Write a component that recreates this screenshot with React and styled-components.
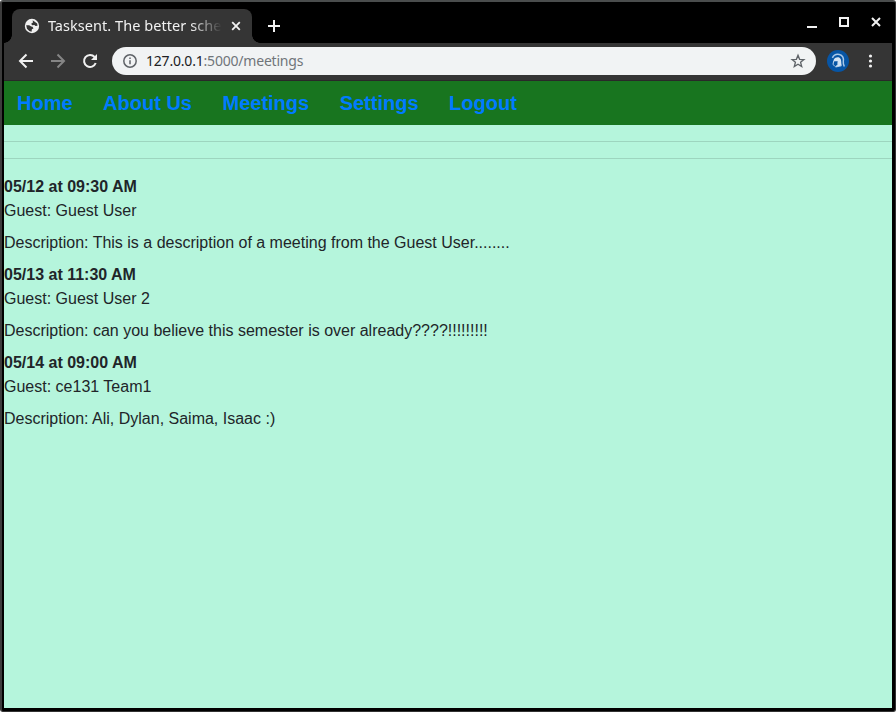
import React from "react";
import styled, { createGlobalStyle } from "styled-components";

const GlobalStyle = createGlobalStyle`
  * { box-sizing: border-box; }
  html, body { margin: 0; padding: 0; overflow: hidden; background: #fff; }
`;

const Window = styled.div`
  width: 896px;
  height: 712px;
  display: flex;
  flex-direction: column;
  background: #000;
  border-style: solid;
  border-color: #4a4d4d #333 #333 #3c3c3c;
  border-width: 2px 1px 1px 2px;
  border-radius: 3px;
  padding: 0 3px 3px 2px;
  font-family: "Noto Sans", "Open Sans", sans-serif;
`;

const TitleBar = styled.header`
  height: 41px;
  flex: none;
  display: flex;
  align-items: flex-end;
  padding-left: 8px;
`;

const Tab = styled.div`
  position: relative;
  width: 240px;
  height: 34px;
  display: flex;
  align-items: center;
  padding: 0 8px 0 12px;
  background: #353535;
  border-radius: 8px 8px 0 0;
  &::before, &::after {
    content: "";
    position: absolute;
    bottom: 0;
    width: 8px;
    height: 8px;
  }
  &::before { left: -8px; background: radial-gradient(circle at 0 0, transparent 7.5px, #353535 8px); }
  &::after { right: -8px; background: radial-gradient(circle at 100% 0, transparent 7.5px, #353535 8px); }
`;

const TabTitle = styled.span`
  width: 175px;
  margin-left: 8px;
  white-space: nowrap;
  font-size: 14.5px;
  letter-spacing: 0.05px;
  line-height: 20px;
  padding-bottom: 2px;
  color: #f1f1f1;
  mask-image: linear-gradient(to right, #000 82%, transparent 100%);
`;

const TabClose = styled.span`
  display: flex;
  margin-left: 6px;
`;

const NewTab = styled.div`
  display: flex;
  margin: 0 auto 10px 15px;
`;

const WindowControls = styled.div`
  display: flex;
  gap: 18px;
  margin: 0 9px 14px 0;
`;

const Toolbar = styled.div`
  height: 38px;
  flex: none;
  display: flex;
  align-items: center;
  padding: 0 14px 1px 14px;
  background: #353535;
  border-bottom: 1px solid #292929;
`;

const NavButtons = styled.div`
  display: flex;
  gap: 16px;
`;

const AddressBar = styled.div`
  width: 704px;
  height: 28px;
  margin-left: 14px;
  border-radius: 14px;
  background: #f1f3f4;
  display: flex;
  align-items: center;
  padding: 0 10px;
`;

const Url = styled.span`
  margin: 0 auto 0 8px;
  font-size: 14px;
  letter-spacing: -0.2px;
  line-height: 20px;
  color: #70757a;
`;

const Host = styled.span`
  color: #202124;
`;

const Avatar = styled.span`
  display: flex;
  margin: 0 auto 0 11px;
`;

const Page = styled.main`
  flex: 1;
  background: #b5f5dc;
  color: #212529;
  font: 16px/24px "Liberation Sans", Arial, sans-serif;
`;

const SiteNav = styled.nav`
  height: 44px;
  display: flex;
  align-items: center;
  gap: 30.5px;
  padding-left: 13px;
  background: #18751f;
`;

const NavLink = styled.a`
  color: #007bff;
  font-size: 20px;
  font-weight: 700;
  line-height: 30px;
  text-decoration: none;
`;

const Rule = styled.hr`
  margin: 16px 0;
  border: 0;
  border-top: 1px solid rgba(0, 0, 0, 0.13);
`;

const Meeting = styled.article`
  margin-bottom: 8px;
`;

const When = styled.div`
  font-weight: 700;
`;

const Detail = styled.p`
  margin: 0 0 8px;
`;

const Icon = ({ size = 16, children, color = "#f1f1f1", width = 2 }) => (
  <svg width={size} height={size} viewBox={`0 0 ${size} ${size}`} fill="none" stroke={color} strokeWidth={width}>
    {children}
  </svg>
);

const links = ["Home", "About Us", "Meetings", "Settings", "Logout"];

const meetings = [
  { when: "05/12 at 09:30 AM", guest: "Guest User", text: "This is a description of a meeting from the Guest User........" },
  { when: "05/13 at 11:30 AM", guest: "Guest User 2", text: "can you believe this semester is over already????!!!!!!!!!" },
  { when: "05/14 at 09:00 AM", guest: "ce131 Team1", text: "Ali, Dylan, Saima, Isaac :)" },
];

export default function App() {
  return (
    <>
      <GlobalStyle />
      <Window>
        <TitleBar>
          <Tab>
            <Icon>
              <circle cx="8" cy="8" r="7.2" fill="#f1f1f1" stroke="none" />
              <path d="M8.7 2.3 13.2 5.5 13.6 7.7 11.6 8.1 10.4 6.9 8.2 7.2 7.2 5.7 9 4.4Z" fill="#353535" stroke="none" />
              <path d="M2.2 7.2 5.2 7.2 7.2 8.5 8.6 8.8 9.5 10.4 7.9 11.2 7.6 13.7 5.3 13.1 3 10.7Z" fill="#353535" stroke="none" />
            </Icon>
            <TabTitle>Tasksent. The better sche</TabTitle>
            <TabClose>
              <Icon size={16} width={1.8}><path d="m4.2 4.2 7.6 7.6m0-7.6-7.6 7.6" /></Icon>
            </TabClose>
          </Tab>
          <NewTab><Icon size={14}><path d="M7 1v12M1 7h12" /></Icon></NewTab>
          <WindowControls>
            <Icon size={14}><path d="M2 12h10" /></Icon>
            <Icon size={14}><rect x="3" y="3" width="8" height="8" /></Icon>
            <Icon size={14}><path d="m3 3 8 8m0-8-8 8" /></Icon>
          </WindowControls>
        </TitleBar>
        <Toolbar>
          <NavButtons>
            <Icon><path d="M15 8H2.5M8.5 1.5 2 8l6.5 6.5" /></Icon>
            <Icon color="#858585"><path d="M1 8h12.5M7.5 1.5 14 8l-6.5 6.5" /></Icon>
            <Icon><path d="M12.6 4A6 6 0 1 0 13.7 10" /><path d="M15 1v6H9Z" fill="#f1f1f1" stroke="none" /></Icon>
          </NavButtons>
          <AddressBar>
            <Icon color="#5f6368" width={1.5}>
              <circle cx="8" cy="8" r="6.2" />
              <path d="M8 7.3v4M8 4.5v1.5" />
            </Icon>
            <Url><Host>127.0.0.1</Host>:5000/meetings</Url>
            <Icon color="#5f6368" width={1.35}>
              <path d="m8 2.3 1.6 4 4.3.3-3.3 2.7 1.1 4.2L8 11.2l-3.7 2.3 1.1-4.2-3.3-2.7 4.3-.3Z" />
            </Icon>
          </AddressBar>
          <Avatar>
            <Icon size={22} width={1}>
              <circle cx="11" cy="11" r="11" fill="#0755a5" stroke="none" />
              <path d="M5.4 7.8C6.8 5 9.6 4 12.3 4.5c3.5.7 4.7 4 4 7.2-.3 1.8.3 3.3 1 4.8" stroke="#a9c8e8" strokeWidth="1.5" />
              <path d="M6.8 9.5C8.4 6.7 12.7 6.4 13.8 9.3c.8 2.3.2 4.2 1 6.3l-6.6 1.3 2.7-2.4.1-3.3-3.8.1-.7 3.2Z" fill="#d5e4f4" stroke="none" />
              <path d="M6.8 10.5 6 14.2l1.7 2.1M11 11.2l-.2 3.3-2.2 2.5 5.8-1.2" stroke="#c5daf0" strokeWidth=".9" />
            </Icon>
          </Avatar>
          <Icon>
            <g fill="#f1f1f1" stroke="none">
              <circle cx="8.5" cy="3" r="1.6" /><circle cx="8.5" cy="8" r="1.6" /><circle cx="8.5" cy="13" r="1.6" />
            </g>
          </Icon>
        </Toolbar>
        <Page>
          <SiteNav>
            {links.map((label) => <NavLink key={label} href="#">{label}</NavLink>)}
          </SiteNav>
          <Rule />
          <Rule />
          {meetings.map((m) => (
            <Meeting key={m.when}>
              <When>{m.when}</When>
              <Detail>Guest: {m.guest}</Detail>
              <Detail>Description: {m.text}</Detail>
            </Meeting>
          ))}
        </Page>
      </Window>
    </>
  );
}
